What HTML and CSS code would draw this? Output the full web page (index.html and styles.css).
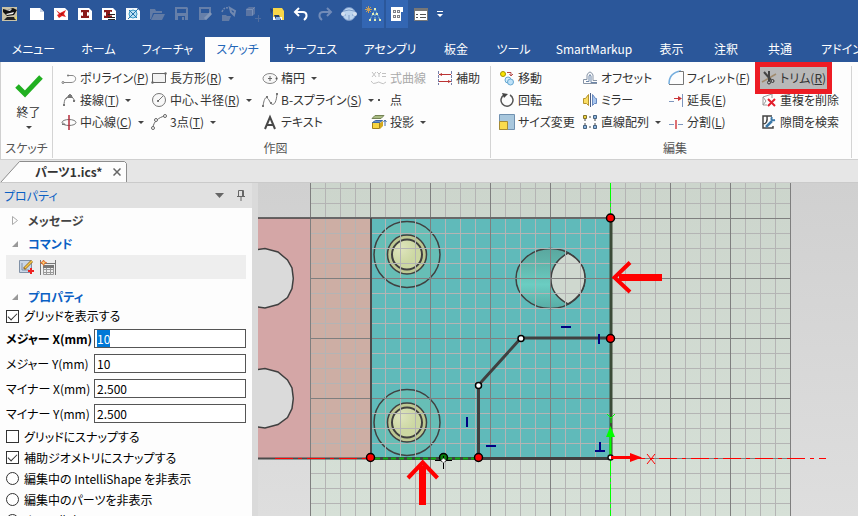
FILE: index.html
```html
<!DOCTYPE html>
<html lang="ja">
<head>
<meta charset="utf-8">
<title>パーツ1.ics</title>
<link rel="stylesheet" href="styles.css">
</head>
<body>
<header class="titlebar">
  <div class="quick">
    <button class="app" aria-label="IRONCAD"><svg width="16" height="16" viewBox="0 0 16 16"><path fill="#c9c2a6" d="M0 1h15v14H0z"/><path fill="#111" d="M1 3l4 1 6-2 4 2-3 5-7 1-4-4z"/><path fill="#f4f4f4" d="M4 4l6-1-2 2zM4 8l8-2-1 2-6 1z"/><path fill="#222" d="M5 11h7l2 3H2z"/><path fill="#e6d76a" d="M12 12l3-2v4z"/></svg></button>
    <button aria-label="新規"><svg width="16" height="16" viewBox="0 0 16 16"><path fill="#fff" d="M1 2h10l4 4v8H1z"/><path fill="#c9d3e6" d="M11 2l4 4h-4z"/></svg></button>
    <button aria-label="新規シーン"><svg width="16" height="16" viewBox="0 0 16 16"><path fill="#fff" d="M1 2h11l3 3v9H1z"/><path fill="#e02020" d="M3 4l4 3 6-3-2 4 2 3-4-1-3 2-2-3 2-1z"/><path fill="#801010" d="M7 8l3-1-1 2z"/></svg></button>
    <button aria-label="新規図面"><svg width="16" height="16" viewBox="0 0 16 16"><path fill="#fff" d="M1 2h11l3 3v9H1z"/><path fill="#8b1a1a" d="M4 4h8v2.500l-2-.5v4l2-.5V12H4V9.500l2 .5V6l-2 .5z"/></svg></button>
    <button aria-label="図面一覧"><svg width="16" height="16" viewBox="0 0 16 16"><path fill="#fff" d="M1 2h11l3 3v9H1z"/><path fill="#8b1a1a" d="M3 4h8v2l-2-.5v4h2V12H3V9.500l2 .5V6l-2 .5z"/><path stroke="#222" d="M7 8.500h7M7 11.500h7M7 13.500h7"/></svg></button>
    <button aria-label="CAXA"><svg width="16" height="16" viewBox="0 0 16 16"><path fill="#f4f8fb" d="M1 2h11l3 3v9H1z"/><circle cx="8" cy="8" r="4" fill="#bfe2f2" stroke="#3a9ac6"/><path stroke="#2473ad" d="M3 13L13 3M4 4l8 8"/></svg></button>
    <button aria-label="開く"><svg width="16" height="16" viewBox="0 0 16 16"><path fill="#627ba5" d="M1 3h5l1 2h6v2H4l-2 6H1zM5 8h11l-3 6H2z"/></svg></button>
    <button aria-label="保存"><svg width="16" height="16" viewBox="0 0 16 16"><path fill="#667fa9" d="M2 1h12l1 1v12H2z"/><path fill="#2b579a" d="M4 3h9v4H4zM5 10h7v4H5z"/><path fill="#667fa9" d="M9 11h2v3H9z"/></svg></button>
    <button aria-label="名前を付けて保存"><svg width="16" height="16" viewBox="0 0 16 16"><path fill="#667fa9" d="M2 1h12v8l-5 5H2z"/><path fill="#2b579a" d="M4 3h8v4H4z"/><path stroke="#8196b8" stroke-width="3" d="M8 13l6-6"/></svg></button>
    <button aria-label="リンク"><svg width="16" height="16" viewBox="0 0 16 16"><path fill="none" stroke="#7088b0" stroke-width="1.500" stroke-dasharray="2 1" d="M1 6q2-5 6-4"/><path fill="none" stroke="#7088b0" stroke-width="2" d="M9 2l5 3-1 4-3-3z"/><path fill="#627ba5" d="M1 9h4l1 1h4l-2 5H1z"/></svg></button>
    <button aria-label="パーツ追加"><svg width="16" height="16" viewBox="0 0 16 16"><path fill="#5b75a3" d="M1 3l3-2h6v7l-3 2H1z"/><path stroke="#4f6da0" d="M10 12.500h6M13.500 9v7"/><path fill="none" stroke="#7890b8" d="M1.500 3.500h6v6M7.500 3.500l2-2"/></svg></button>
    <button aria-label="カタログ"><svg width="16" height="16" viewBox="0 0 16 16"><path fill="#f8d648" d="M4 2h9l2 3v9H4z"/><path fill="#fff" d="M4 11h9v3H4z"/><path fill="#263f6c" d="M1 2l3 2-2 4zM5 9h5l2 5H7z"/><path fill="#85aee0" d="M7 11h4v3H7z"/></svg></button>
    <button aria-label="元に戻す"><svg width="16" height="16" viewBox="0 0 16 16"><path fill="none" stroke="#fff" stroke-width="2" d="M6 2L2 6l4 4M2 6h8c4 0 5 5 1 8"/></svg></button>
    <button aria-label="やり直す"><svg width="16" height="16" viewBox="0 0 16 16"><path fill="none" stroke="#718bb8" stroke-width="2" d="M10 2l4 4-4 4M14 6H6c-4 0-5 5-1 8"/></svg></button>
    <button aria-label="球"><svg width="16" height="16" viewBox="0 0 16 16"><circle cx="8" cy="8" r="6.500" fill="#bcd4ee" stroke="#7595c6"/><path stroke="#7c9cc7" fill="none" d="M3 5q5-2 10 0M2 9h3M11 9h3M8 9v5"/><circle cx="2" cy="8" r="2" fill="#d5e1f0"/><circle cx="14" cy="8" r="2" fill="#d5e1f0"/></svg></button>
    <button class="on" aria-label="構造"><svg width="16" height="16" viewBox="0 0 16 16"><path stroke="#c9a05a" d="M3.500 0v7M0 3.500h7M1 1l5 5M6 1L1 6"/><path fill="none" stroke="#85c1d8" stroke-dasharray="2 1" d="M10 3L5 14M10 3l5 11M7 8h6M10 8v6"/><path fill="#e5efb6" d="M9 2h2v2H9zM7 7h2v2H7zM11 7h2v2h-2zM4 13h2v2H4zM9 13h2v2H9zM14 13h2v2h-2z"/></svg></button>
    <button class="on" aria-label="パネル"><svg width="16" height="16" viewBox="0 0 16 16"><path fill="#fff" d="M2 1h12v5h-2v9H2z"/><path fill="#7d8088" d="M4 4h3v3H4zM8 4h3v3H8zM4 9h3v3H4zM8 9h3v3H8z"/><path fill="#f5f5f5" d="M5 5h1v1H5zM9 5h1v1H9zM5 10h1v1H5zM9 10h1v1H9z"/></svg></button>
    <button aria-label="プロパティ表示"><svg width="16" height="16" viewBox="0 0 16 16"><path fill="#fff" stroke="#777" d="M1.500 2.500h13v12h-13z"/><path fill="#777" d="M1 2h14v3H1z"/><path stroke="#555" d="M3 8.500h2M7 8.500h6M3 11.500h2M7 11.500h6"/></svg></button>
    <button class="more" aria-label="カスタマイズ"><svg width="6" height="6" viewBox="0 0 6 6"><path fill="#fff" d="M0 0h6v1H0zM0 3h6L3 6z"/></svg></button>
  </div>
  <nav class="tabs">
    <a href="#">メニュー</a><a href="#">ホーム</a><a href="#">フィーチャ</a><a href="#" class="active">スケッチ</a><a href="#">サーフェス</a><a href="#">アセンブリ</a><a href="#">板金</a><a href="#">ツール</a><a href="#" class="latin">SmartMarkup</a><a href="#">表示</a><a href="#">注釈</a><a href="#">共通</a><a href="#">アドイン</a>
  </nav>
</header>

<section class="ribbon">
  <div class="group finish">
    <button class="big"><svg width="28" height="24" viewBox="0 0 28 24"><path fill="none" stroke="#21b021" stroke-width="5" d="M2 12l8 8L26 3"/></svg><span>終了</span><i class="caret"></i></button>
    <h2>スケッチ</h2>
  </div>
  <div class="group draw">
    <div class="tools">
      <button><svg width="16" height="16" viewBox="0 0 16 16"><path fill="none" stroke="#888" d="M2 12.500h8c6 0 6-7 1-7H7"/><circle cx="2" cy="12.500" r="1" fill="#fff" stroke="#777"/><circle cx="7" cy="5.500" r="1" fill="#777"/></svg>ポリライン(<u>P</u>)</button>
      <button><svg width="16" height="16" viewBox="0 0 16 16"><path fill="#f2f2f2" stroke="#666" d="M1.500 3.500h13v9h-13z"/><circle cx="14.500" cy="3.500" r="1.200" fill="#666"/><circle cx="1.500" cy="12.500" r="1.200" fill="#666"/></svg>長方形(<u>R</u>)<i class="caret"></i></button>
      <button><svg width="16" height="16" viewBox="0 0 16 16"><ellipse cx="8" cy="8.500" rx="7" ry="5" fill="#f7f7f7" stroke="#888"/><path stroke="#666" d="M6 8.500h4M8 6v5"/><circle cx="14.500" cy="8.500" r="1" fill="#555"/></svg>楕円<i class="caret"></i></button>
      <button disabled><svg width="16" height="16" viewBox="0 0 16 16"><path fill="none" stroke="#c2c2c2" d="M1 2l4 5M5 2L1 7M6 2l2 2 2-2M8 4v3M11 3.500h4M11 6.500h4M0 11q2 4 5 2t5 0 5-1"/></svg>式曲線</button>
      <button><svg width="16" height="16" viewBox="0 0 16 16"><path stroke="#777fa8" stroke-dasharray="3 1" d="M1.500 1v14M14.500 1v14"/><path stroke="#b33" d="M2 4.500h12M2 11.500h12"/><path fill="#b33" d="M2 4.500l3-1.500v3zM14 11.500l-3-1.500v3z"/></svg>補助</button>
      <button><svg width="16" height="16" viewBox="0 0 16 16"><path fill="none" stroke="#777" d="M3 14c0-7 2-9 5-9M5 7l4-5 5 7"/><path fill="#777" d="M7 3h4v3H7zM2 12h2v2H2zM12 8h2v2h-2z"/></svg>接線(<u>T</u>)<i class="caret"></i></button>
      <button><svg width="16" height="16" viewBox="0 0 16 16"><circle cx="8" cy="8" r="6.500" fill="#f8f8f8" stroke="#777"/><path stroke="#777" d="M7 9l5-5"/><circle cx="7" cy="9" r="1" fill="#555"/></svg>中心、半径(<u>R</u>)<i class="caret"></i></button>
      <button><svg width="16" height="16" viewBox="0 0 16 16"><path fill="none" stroke="#777" d="M1 14C3 1 6 6 8 10s6 4 7-8"/><path fill="#777" d="M0 13h2v2H0zM4 4h2v2H4zM8 10h2v2H8zM14 1h2v2h-2z"/></svg>B-スプライン(<u>S</u>)<i class="caret"></i></button>
      <button class="wide"><svg width="16" height="16" viewBox="0 0 16 16"><path fill="#555" d="M7 7h2v2H7z"/></svg>点</button>
      <button><svg width="16" height="16" viewBox="0 0 16 16"><ellipse cx="8" cy="8.500" rx="7" ry="3" fill="none" stroke="#777"/><path stroke="#b42b3b" stroke-width="1.500" d="M8 1v15"/><path stroke="#777" fill="none" d="M1 10.500h3l-2-2"/></svg>中心線(<u>C</u>)<i class="caret"></i></button>
      <button><svg width="16" height="16" viewBox="0 0 16 16"><path fill="none" stroke="#666" d="M2 14C2 8 8 3 14 2"/><circle cx="2" cy="14" r="1.500" fill="#fff" stroke="#666"/><circle cx="5" cy="6" r="1.500" fill="#fff" stroke="#666"/><circle cx="14" cy="2" r="1.500" fill="#fff" stroke="#666"/></svg>3点(<u>T</u>)<i class="caret"></i></button>
      <button><svg width="16" height="16" viewBox="0 0 16 16"><path fill="none" stroke="#484848" stroke-width="2" d="M3 15L8 3l5 12M5 11h6"/></svg>テキスト</button>
      <button class="wide"><svg width="16" height="16" viewBox="0 0 16 16"><path fill="#a9bc83" stroke="#748355" d="M4 1.500h9l-3 3H1z"/><path fill="#f6d441" stroke="#a28119" d="M1.500 8.500h7v6h-7z"/><path fill="#6a91c9" stroke="#3e66a3" d="M1.500 8.500l3-2h7l-3 2z"/><path fill="#d4a91d" d="M9 9l3-2v5l-3 3z"/><path stroke="#456ba3" fill="none" d="M14 6v6M12.500 8L14 6l1.500 2"/></svg>投影<i class="caret"></i></button>
    </div>
    <h2>作図</h2>
  </div>
  <div class="group edit">
    <div class="tools">
      <button><svg width="16" height="16" viewBox="0 0 16 16"><circle cx="4" cy="4" r="2.500" fill="#fae400" stroke="#a59400"/><path fill="none" stroke="#b34848" d="M8 2.500h4v3M10.500 4L12 6l2-2"/><circle cx="9" cy="10" r="3" fill="#d5edfa" stroke="#66a8d2"/><circle cx="11.500" cy="12" r="3" fill="#bee1f8" stroke="#66a8d2"/></svg>移動</button>
      <button><svg width="16" height="16" viewBox="0 0 16 16"><path fill="none" stroke="#8794a6" d="M15 10.500h-4V5q-3-6-6 0v4.500H1.500v4H15"/><path fill="none" stroke="#6d86a8" d="M4 11.500h3V6q1-3 2 0v6.500h6"/></svg>オフセット</button>
      <button><svg width="16" height="16" viewBox="0 0 16 16"><path fill="none" stroke="#75aede" stroke-width="1.500" d="M1 14C1 6 5 2 13 1"/><path fill="none" stroke="#777" d="M11 1.500h4.500v13H1"/></svg>フィレット(<u>F</u>)<i class="caret"></i></button>
      <button class="trim"><svg width="16" height="16" viewBox="0 0 16 16"><path stroke="#a08a6c" stroke-width="1.500" d="M1 12L15 4"/><path stroke="#444" stroke-width="2" d="M3 2l7 8M8 1v10"/><circle cx="8" cy="12.500" r="1.500" fill="none" stroke="#333"/><circle cx="11.500" cy="11" r="1.500" fill="none" stroke="#333"/></svg>トリム(<u>R</u>)</button>
      <button><svg width="16" height="16" viewBox="0 0 16 16"><path fill="none" stroke="#555" stroke-width="1.500" d="M5 3a6 6 0 1 0 6 0"/><path fill="#444" d="M3 1l6 1-4 4z"/></svg>回転</button>
      <button><svg width="16" height="16" viewBox="0 0 16 16"><path fill="#fade65" stroke="#b6942c" d="M6.500 2.500v11l-2-2h-3v-5h2z"/><path stroke="#4b5d85" d="M8.500 1v14"/><path fill="#a8c6ee" stroke="#6688bf" d="M10.500 2.500l3 4h1v5h-2l-2 2z"/></svg>ミラー</button>
      <button><svg width="16" height="16" viewBox="0 0 16 16"><path stroke="#7e96bd" d="M1 9.500h5M14.500 2v13"/><path stroke="#c93639" d="M6 6.500h7"/><path fill="#c93639" d="M10 4l4 2.500L10 9z"/></svg>延長(<u>E</u>)</button>
      <button><svg width="16" height="16" viewBox="0 0 16 16"><path fill="none" stroke="#999" d="M2 13V5l9-3v4M2 5l3 4-3 4h4"/><path stroke="#e21d2b" stroke-width="2" d="M7 7l7 7M14 7l-7 7"/></svg>重複を削除</button>
      <button><svg width="16" height="16" viewBox="0 0 16 16"><path fill="#a8c7dd" stroke="#7091b0" d="M.5.5h15v15H.5z"/><path fill="#fadc4c" stroke="#a68c35" d="M.5 7.500h8v8h-8z"/></svg>サイズ変更</button>
      <button><svg width="16" height="16" viewBox="0 0 16 16"><path fill="none" stroke="#444" stroke-dasharray="2 2" d="M3 3h10v10H3z"/><path fill="#f1d443" stroke="#82722a" d="M1.500 1.500h3v3h-3z"/><path fill="#8eb6e0" stroke="#45617e" d="M11.500 1.500h3v3h-3zM1.500 11.500h3v3h-3zM11.500 11.500h3v3h-3z"/></svg>直線配列<i class="caret"></i></button>
      <button><svg width="16" height="16" viewBox="0 0 16 16"><path stroke="#7e96bd" d="M1 10.500h5M10 10.500h5"/><path stroke="#d34146" d="M8 6v9" stroke-width="1.500"/></svg>分割(<u>L</u>)</button>
      <button><svg width="16" height="16" viewBox="0 0 16 16"><path fill="none" stroke="#444" stroke-width="1.500" d="M11 2H2v12h10v-2M2 10q5 0 4-8"/><path stroke="#3d79a8" stroke-width="2.500" d="M5 13l6-6"/><path fill="none" stroke="#3d79a8" stroke-width="2" d="M11 3q-2 4 3 3"/></svg>隙間を検索</button>
    </div>
    <h2>編集</h2>
  </div>
</section>

<div class="docs">
  <div class="doc">
    <svg class="shape" viewBox="0 0 127 21" preserveAspectRatio="none"><path fill="#fdfdfd" stroke="#8d8d8d" d="M1 21L19.500.5h105l2 2V21"/></svg>
    <span>パーツ1.ics*</span>
    <button aria-label="閉じる"><svg width="8" height="8" viewBox="0 0 8 8"><path stroke="#666" stroke-width="1.500" d="M.5.5l7 7M7.500.5l-7 7"/></svg></button>
  </div>
</div>

<main class="work">
  <aside class="panel">
    <div class="head"><span>プロパティ</span><svg width="9" height="5" viewBox="0 0 9 5"><path fill="#666" d="M0 0h9L4.500 5z"/></svg><svg width="8" height="11" viewBox="0 0 8 11"><path fill="none" stroke="#666" d="M1.500 6V.5h5V6M5.500 1v5M0 6.500h8M4 7v4"/></svg></div>
    <div class="body">
      <h3 class="closed"><svg width="6" height="9" viewBox="0 0 6 9"><path fill="none" stroke="#aaa" d="M.5.5v8l5-4z"/></svg>メッセージ</h3>
      <h3><svg width="6" height="6" viewBox="0 0 6 6"><path fill="#999" d="M6 0v6H0z"/></svg>コマンド</h3>
      <div class="commands">
        <button aria-label="スケッチ編集"><svg width="16" height="16" viewBox="0 0 16 16"><path fill="#c9d6e6" stroke="#8091a6" d="M.5 1.500h12v12H.5z"/><path fill="none" stroke="#8091a6" d="M3 4v7h7"/><path stroke="#9c702b" stroke-width="3" d="M5 10l8-8"/><path stroke="#f5c947" stroke-width="1.500" d="M6 9l7-7"/><path stroke="#e22" stroke-width="2" d="M9 12h6M12 9v6"/></svg></button>
        <button aria-label="寸法表"><svg width="16" height="16" viewBox="0 0 16 16"><path stroke="#777" d="M.5 1v15M15.500 1v15M1 4.500h14"/><path fill="#eee" stroke="#999" d="M3.500 7.500h10v8h-10zM3 10.500h11M3 13.500h11M6.500 7v9M10.500 7v9"/><path fill="#777" d="M3 6h11v3H3z"/><path fill="#f8cf72" stroke="#e26d2c" d="M3.500 1l1 2 2 .5-2 1-1 2-1-2-2-1 2-.5z"/></svg></button>
      </div>
      <h3 class="props"><svg width="6" height="6" viewBox="0 0 6 6"><path fill="#999" d="M6 0v6H0z"/></svg>プロパティ</h3>
      <label class="opt first"><input type="checkbox" checked>グリッドを表示する</label>
      <div class="field strong"><label for="majx">メジャー X(mm)</label><div class="box"><input id="majx" value="10"></div></div>
      <div class="field"><label for="majy">メジャー Y(mm)</label><div class="box"><input id="majy" value="10"></div></div>
      <div class="field"><label for="minx">マイナー X(mm)</label><div class="box"><input id="minx" value="2.500"></div></div>
      <div class="field"><label for="miny">マイナー Y(mm)</label><div class="box"><input id="miny" value="2.500"></div></div>
      <label class="opt"><input type="checkbox">グリッドにスナップする</label>
      <label class="opt"><input type="checkbox" checked>補助ジオメトリにスナップする</label>
      <label class="opt"><input type="radio" name="hide">編集中の IntelliShape を非表示</label>
      <label class="opt"><input type="radio" name="hide">編集中のパーツを非表示</label>
      <label class="opt"><input type="radio" name="hide">すべて非表示</label>
    </div>
  </aside>
  <div class="canvas">
    <svg viewBox="258 183 600 333" preserveAspectRatio="xMinYMin slice">
      <defs>
        <linearGradient id="bg" x2="0" y2="1"><stop stop-color="#d0d0d0"/><stop offset="1" stop-color="#dedede"/></linearGradient>
        <linearGradient id="sheet" x2="0" y2="1"><stop stop-color="#ccd5cc"/><stop offset="1" stop-color="#d6e0d7"/></linearGradient>
        <linearGradient id="bore" x2="0" y2="1"><stop stop-color="#5aa79f"/><stop offset=".25" stop-color="#60b4aa"/><stop offset=".6" stop-color="#6bcdc2"/><stop offset="1" stop-color="#58aca5"/></linearGradient>
        <radialGradient id="bolt" cx=".3" cy=".3"><stop stop-color="#dfe5bd"/><stop offset="1" stop-color="#ccd7a2"/></radialGradient>
        <pattern id="minor" x="310" y="188" width="15" height="15" patternUnits="userSpaceOnUse"><path fill="#b4b4b4" d="M0 0h15v1H1v14H0z"/></pattern>
        <pattern id="major" x="310" y="218" width="60" height="60" patternUnits="userSpaceOnUse"><path fill="#7f7f7f" d="M0 0h60v1H1v59H0z"/></pattern>
        <g id="hole"><path fill="#dadada" stroke="#404040" stroke-width="1.500" d="M255 250l10-1.500 13 3.500 9.500 8 4.500 8 1.300 10.500-1.300 10-4.500 9-9.500 7-13 3.500-10-1.500"/></g>
        <g id="screw" fill="none" stroke="#404040"><circle cx="407" cy="254.500" r="33" fill="#67beb6" stroke-width="1.500"/><circle cx="407" cy="254.500" r="19.500" fill="#bdc892" stroke-width="1.500"/><circle cx="407" cy="254.500" r="15" fill="url(#bolt)" stroke-width="2"/></g>
      </defs>
      <path fill="url(#bg)" d="M258 183h600v333H258z"/>
      <path fill="url(#sheet)" d="M310 183h481v333H310z"/>
      <path fill="#d4a6a6" d="M258 218h52v240h-52z"/>
      <path fill="#cdaea4" d="M310 218h61v240h-61z"/>
      <path fill="#60baba" d="M371 218h240v240H371z"/>
      <use href="#hole"/><use href="#hole" y="120"/>
      <use href="#screw"/><use href="#screw" y="168"/>
      <ellipse cx="550.500" cy="278.500" rx="34.500" ry="30" fill="url(#bore)" stroke="#404040" stroke-width="1.500"/>
      <path fill="#cfd8cf" stroke="#404040" stroke-width="1.500" d="M568 253q-16 9-17 25t17 26q17-10 17-26t-17-25z"/>
      <path fill="url(#minor)" d="M310 183h481v333H310z"/>
      <path fill="url(#major)" d="M310 183h481v333H310z"/>
      <g fill="none" stroke="#404040">
        <path stroke-width="1.500" d="M258 218h52"/><path stroke="#686868" stroke-width="2" d="M310 218h300"/>
        <path stroke="#4a4a4a" stroke-width="2" d="M258 458.500h112M371 218v240"/>
        <path stroke="#3b4b37" stroke-width="3" d="M611 218v240"/>
        <path stroke-width="3" d="M371 458.500h240"/>
        <path stroke-width="3" d="M478.500 458v-73l42.500-47h90"/>
      </g>
      <path stroke="#11ac11" stroke-width="2" stroke-dasharray="5 3" d="M375 458.500h103"/>
      <path stroke="red" stroke-dasharray="18 5 4 5" d="M275 458.500h95"/>
      <path stroke="red" stroke-dasharray="18 5 4 5" d="M627 458.500h199"/>
      <path stroke="#0f0" stroke-dasharray="18 2 4 2" d="M610.500 183v35M610.500 458v58"/>
      <g stroke="#000082" stroke-width="2" fill="none"><path d="M561 327h10M599 334v10M467 417v10M486 446h10M595 451h10M600 442v9"/></g>
      <path stroke="#0f0" stroke-width="2" d="M610.500 457v-22"/><path fill="#0f0" d="M606 437l4.500-11 4.500 11z"/>
      <path stroke="#0f0" fill="none" d="M607 414l4 4 4-4M611 418v5"/>
      <circle cx="610.500" cy="457.500" r="2.500" fill="#fff" stroke="#111" stroke-width="1.500"/>
      <path stroke="red" stroke-width="3" d="M611 457.500h20"/><path fill="red" d="M630 453l12 4.500-12 4.500z"/>
      <path stroke="red" d="M647 454l8 10M655 454l-8 10"/>
      <g fill="red" stroke="#000" stroke-width="1.500"><circle cx="370.500" cy="457.500" r="4"/><circle cx="478.500" cy="457.500" r="4"/><circle cx="610.500" cy="338.500" r="4"/><circle cx="610.500" cy="218" r="4"/></g>
      <g fill="#fff" stroke="#000" stroke-width="1.500"><circle cx="521" cy="338.500" r="3"/><circle cx="478.500" cy="385.500" r="3"/></g>
      <circle cx="443.500" cy="457.500" r="4" fill="#087c08" stroke="#000" stroke-width="1.500"/>
      <path stroke="#000" d="M435 460.500h17M443.500 456v13"/><path fill="#fff" stroke="#333" stroke-width=".5" d="M443.500 458l2.500 2.500-2.500 2.500-2.500-2.500z"/>
      <g fill="none" stroke="red"><path stroke-width="7" d="M422.500 505v-39M662 277.500h-43"/><path stroke-width="4" d="M408 478l14.700-15.500L437.500 478M630 262.500l-15.500 15L630 292"/></g>
    </svg>
  </div>
</main>
<script>document.getElementById('majx').select();</script>
</body>
</html>
```
FILE: styles.css
```css
* { box-sizing: border-box; }
body {
  margin: 0;
  height: 100vh;
  display: flex;
  flex-direction: column;
  overflow: hidden;
  background: #e6e6e6;
  color: #333;
  font: 12px/16px "Noto Sans CJK JP", "Open Sans", sans-serif;
  font-feature-settings: "palt";
}
button {
  border: 0;
  padding: 0;
  background: none;
  color: inherit;
  font: inherit;
  font-feature-settings: inherit;
}
svg { flex: none; display: block; }
h2, h3 { margin: 0; font-size: 12px; }

.titlebar { background: #2b579a; }
.quick { display: flex; height: 28px; margin-bottom: 9px; }
.quick button { width: 24px; display: grid; place-items: center; }
.quick .app { width: 25px; padding-right: 5px; }
.quick .more { width: 14px; }
.quick .on { background: #3366b3; border: solid #2b579a; border-width: 0 1px; }
.tabs {
  display: grid;
  grid-template-columns: 67px 63px 75px 65px 81px 78px 54px 61px 100px 55px 54px 54px 1fr;
  height: 25px;
}
.tabs a {
  color: #fff;
  text-decoration: none;
  text-align: center;
  white-space: nowrap;
  line-height: 24px;
}
.tabs a:last-child { text-align: left; padding-left: 14px; }
.tabs .active { background: #fdfdfd; color: #2467b8; }

.ribbon {
  display: flex;
  height: 98px;
  padding: 4px 0 1px;
  background: #fdfdfd;
  border: solid #d0d0d0;
  border-width: 0 0 1px 1px;
}
.group {
  display: flex;
  flex-direction: column;
  justify-content: space-between;
  border-right: 1px solid #d4d4d4;
}
.group h2 { font-weight: 400; text-align: center; color: #555; line-height: 20px; }
.finish { width: 52px; }
.draw { width: 438px; padding-left: 8px; }
.edit { width: 361px; padding-left: 8px; }
.big { display: flex; flex-direction: column; align-items: center; gap: 6px; padding-top: 8px; padding-left: 4px; }
.tools { display: grid; grid-auto-rows: 22px; padding-top: 1px; }
.draw .tools { grid-template-columns: 90px 111px 109px 66px 1fr; }
.edit .tools { grid-template-columns: 83px 86px 93px 1fr; }
.tools button {
  display: flex;
  align-items: center;
  white-space: nowrap;
  position: relative;
  width: 0;
}
.tools svg { margin-right: 3px; }
.tools .wide { grid-column: span 2; }
.tools button:disabled { color: #aaa; }
.caret { flex: none; border: solid transparent; border-width: 3px 3px 0; border-top-color: #444; margin-left: 6px; }
.big .caret { margin-left: 0; }
.tools .trim { z-index: 1; width: 65px; }
.trim::before {
  content: "";
  position: absolute;
  z-index: -1;
  inset: -5px -6px;
  background: #b8b8b8;
  border: 5px solid #ed1c24;
}

.docs { height: 23px; display: flex; align-items: flex-end; border-bottom: 1px solid #cacaca; }
.doc { position: relative; width: 127px; height: 21px; display: flex; align-items: center; justify-content: space-between; padding: 0 6px 0 35px; font-weight: 600; }
.doc .shape { position: absolute; inset: 0; width: 100%; height: 100%; }
.doc span, .doc button { position: relative; }

.work { flex: 1; min-height: 0; display: flex; }
.panel { width: 258px; flex: none; border-right: 6px solid #dadada; background: #fdfdfd; color: #111; overflow: hidden; }
.head { display: flex; align-items: center; height: 25px; gap: 18px; padding: 0 7px 0 4px; background: #e1e1e1; color: #0a60c4; }
.head span { flex: 1; }
.head svg:nth-of-type(1) { margin-right: -5px; }
.body { padding: 1px 6px 0; }
h3 { display: flex; align-items: center; gap: 10px; height: 23px; padding-left: 6px; color: #0a60c4; font-weight: 700; }
h3.closed { color: #444; }
.commands { height: 24px; display: flex; align-items: center; gap: 5px; padding-left: 13px; background: #eee; }
h3.props { margin-top: 6px; }
.opt { display: flex; align-items: center; height: 21px; white-space: nowrap; color: #000; }
.opt.first { height: 16px; margin-bottom: 2px; }
.opt input {
  appearance: none;
  width: 13px;
  height: 13px;
  margin: 0 5px 0 0;
  border: 1px solid #333;
  background: #fff;
  display: grid;
  place-items: center;
}
.opt input[type="radio"] { border-radius: 50%; }
.opt input:checked::before {
  content: "";
  width: 8px;
  height: 4px;
  margin-bottom: 2px;
  border: solid #333;
  border-width: 0 0 1px 1px;
  rotate: -45deg;
}
.field { display: flex; align-items: center; height: 25px; color: #000; }
.field label { width: 88px; white-space: nowrap; }
.strong label { font-weight: 700; }
.box { flex: 1; height: 19px; border: 1px solid #555; background: #fff; }
.box input { display: block; width: 100%; height: 17px; border: 0; padding: 0 2px; outline: 0; background: none; font: inherit; color: #000; }
.box ::selection { background: #0078d7; color: #fff; }
.canvas { flex: 1; min-width: 0; overflow: hidden; }
.canvas svg { width: 100%; height: 100%; }
```
